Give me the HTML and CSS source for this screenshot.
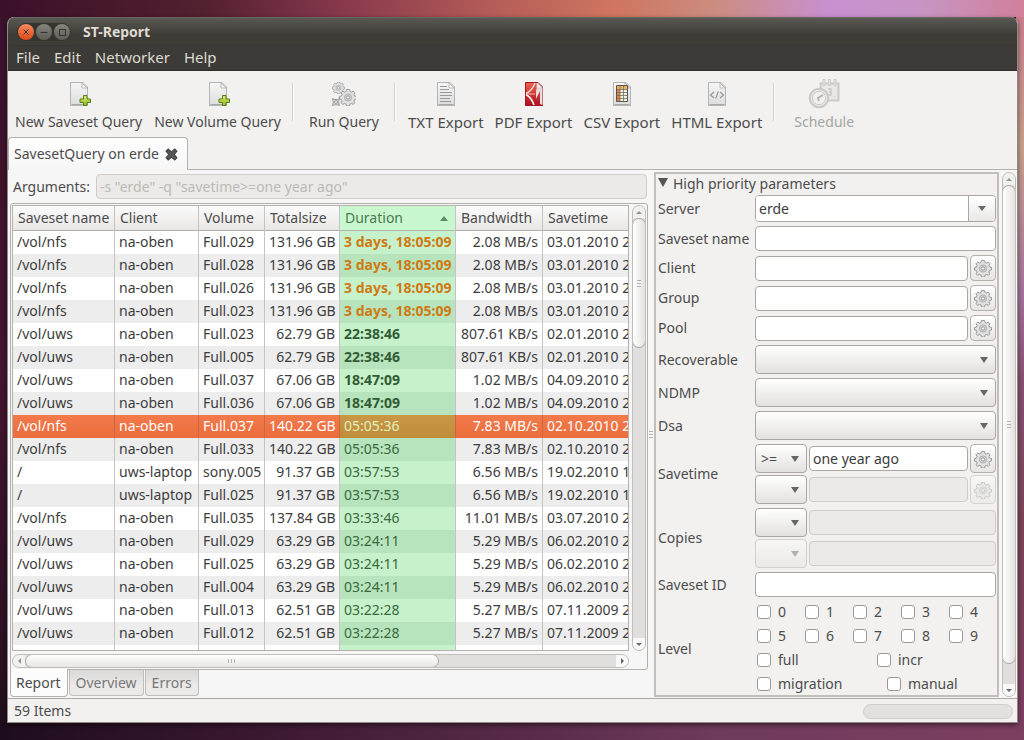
FILE: index.html
```html
<!DOCTYPE html>
<html lang="en">
<head>
<meta charset="utf-8">
<title>ST-Report</title>
<link rel="stylesheet" href="styles.css">
</head>
<body>
<svg class="defs" aria-hidden="true">
  <defs>
    <linearGradient id="paper" x1="0" y1="0" x2="0" y2="1"><stop offset="0" stop-color="#f6f6f6"/><stop offset="1" stop-color="#dcdcdc"/></linearGradient>
    <linearGradient id="green" x1="0" y1="0" x2="0" y2="1"><stop offset="0" stop-color="#e2ee6c"/><stop offset="1" stop-color="#8fb827"/></linearGradient>
    <linearGradient id="red" x1="0" y1="0" x2="0" y2="1"><stop offset="0" stop-color="#f0614e"/><stop offset="1" stop-color="#ab1022"/></linearGradient>
    <symbol id="page" viewBox="0 0 24 24"><path d="M3.500 .5H16L20.500 5V23.500H3.500Z" fill="url(#paper)" stroke="#b4b4b4"/><path d="M4.500 22.500h15" stroke="#a9a9a9" fill="none"/><path d="M15 1v5h5Z" fill="#fdfdfd" stroke="#b9b9b9"/></symbol>
    <symbol id="newpage" viewBox="0 0 24 24"><use href="#page" width="24" height="24"/><path d="M16.500 13.500h3.500v3.500h3.500v3.500h-3.500v3h-3.500v-3h-3.500v-3.500h3.500z" fill="url(#green)" stroke="#548018"/></symbol>
    <symbol id="gear" viewBox="0 0 18 18"><path d="M7.500 1.500h3l.5 2 1.500.6 1.800-1 1.600 1.600-1 1.800.6 1.500 2 .5v2.500l-2 .5-.6 1.500 1 1.800-1.600 1.600-1.800-1-1.500.6-.5 2h-3l-.5-2-1.500-.6-1.800 1-1.600-1.600 1-1.800-.6-1.500-2-.5V8.500l2-.5.6-1.500-1-1.800 1.600-1.600 1.800 1L7 3.500Z" fill="#e1e1e1" stroke="#999"/><circle cx="9" cy="9.500" r="3.600" fill="#d6d6d6" stroke="#b0b0b0"/><circle cx="9" cy="9.500" r="1.700" fill="#f4f4f4" stroke="#999"/></symbol>
  </defs>
</svg>
<main class="window">
  <header class="titlebar">
    <div class="wm">
      <button class="wm-btn close" aria-label="Close"><svg viewBox="0 0 16 16"><path d="M5.500 5.500l5 5m0-5l-5 5"/></svg></button>
      <button class="wm-btn" aria-label="Minimize"><svg viewBox="0 0 16 16"><path d="M4.500 8.500h7"/></svg></button>
      <button class="wm-btn" aria-label="Maximize"><svg viewBox="0 0 16 16"><path d="M5.500 5.500h6v6h-6z"/></svg></button>
    </div>
    <h1>ST-Report</h1>
  </header>
  <nav class="menubar"><button>File</button><button>Edit</button><button>Networker</button><button>Help</button></nav>
  <div class="toolbar">
    <button class="tool"><svg viewBox="0 0 24 24"><use href="#newpage"/></svg><span>New Saveset Query</span></button>
    <button class="tool"><svg viewBox="0 0 24 24"><use href="#newpage"/></svg><span>New Volume Query</span></button>
    <i class="sep"></i>
    <button class="tool wide"><svg viewBox="0 0 24 24"><use href="#gear" x="0" y="-1" width="13" height="13"/><use href="#gear" x="7" y="6" width="18" height="18"/><path d="M.5 16.500l2 1h3l2-1-.7 2.500v2l.7 2.500-2-.7h-3l-2 .7.700-2.500v-2Z" fill="#ddd" stroke="#999"/><circle cx="4" cy="20" r="1.500" fill="#eee" stroke="#999"/></svg><span>Run Query</span></button>
    <i class="sep near"></i>
    <div class="exports">
    <button class="tool"><svg viewBox="0 0 24 24"><use href="#page"/><path d="M6 4.500h7M6 7.500h9M6 10.500h12M6 13.500h12M6 16.500h10M6 19.500h11" stroke="#999"/></svg><span>TXT Export</span></button>
    <button class="tool"><svg viewBox="0 0 24 24"><path d="M3.500 .5H16L20.500 5V23.500H3.500Z" fill="url(#red)" stroke="#a41622"/><path d="M4 11.500Q10 9 13 1" fill="none" stroke="#f9d9d4" stroke-width="1.500"/><path d="M4 12.500Q9 15 12 23" fill="none" stroke="#fff" stroke-width="1.500"/><path d="M4 12h9" stroke="#f3b5ad"/><path d="M16 1l4.500 4.500V23L18 22V9l-4 8V9Z" fill="#e8dcdc"/><path d="M15 1v5h5Z" fill="#fff" stroke="#ccc"/></svg><span>PDF Export</span></button>
    <button class="tool"><svg viewBox="0 0 24 24"><use href="#page"/><path d="M6.500 3.500h11v16h-11z" fill="#f5f1e2" stroke="#555"/><path d="M7 4h3v15H7z" fill="#e9803c"/><path d="M7 4h10v3H7z" fill="#efb45c"/><path d="M10 4v15M13.500 4v15M7 7.500h10.500M7 10.500h10.500M7 13.500h10.500M7 16.500h10.500" stroke="#73705f" stroke-width=".8"/></svg><span>CSV Export</span></button>
    <button class="tool"><svg viewBox="0 0 24 24"><use href="#page"/><path d="M9 10l-3.500 3L9 16M15 10l3.500 3-3.500 3M13.300 9.500l-2.600 7" fill="none" stroke="#999" stroke-width="1.200"/></svg><span>HTML Export</span></button>
    </div>
    <i class="sep"></i>
    <button class="tool widest" disabled><svg class="big" viewBox="0 0 32 32"><g fill="#e9e8e7" stroke="#cbc9c7"><path d="M12.500 5.500h18v17h-18z" stroke-width="2"/><path d="M15 1.500h2v6h-2zM20.500 1.500h2v6h-2zM26 1.500h2v6h-2z"/><path d="M20 11h3v3h-2m2 0v3h-3M26 18.500h1" fill="none" stroke-width="1.500"/><circle cx="11" cy="20" r="9.300" stroke-width="2"/><circle cx="11" cy="20" r="6.700" fill="#f0efee"/></g><path d="M15 17l-5 3 1 3" fill="none" stroke="#b8b6b4" stroke-width="2"/></svg><span>Schedule</span></button>
  </div>
  <div class="doc-tabs">
    <div class="doc-tab"><span>SavesetQuery on erde</span><button aria-label="Close tab"><svg viewBox="0 0 12 12"><path d="M1 3l2-2 3 2.500L9 1l2 2-2.500 3L11 9l-2 2-3-2.500L3 11 1 9l2.500-3z" fill="#555" stroke="#444"/></svg></button></div>
  </div>
  <div class="content">
    <section class="left">
      <div class="args"><label for="args">Arguments:</label><input id="args" class="field" disabled value='-s "erde" -q "savetime&gt;=one year ago"'></div>
      <div class="report">
        <div class="grid-view">
          <table>
            <colgroup><col class="c1"><col class="c2"><col class="c3"><col class="c4"><col class="c5"><col class="c6"><col class="c7"></colgroup>
            <thead><tr><th>Saveset name</th><th>Client</th><th>Volume</th><th>Totalsize</th><th class="sorted">Duration<i class="up"></i></th><th>Bandwidth</th><th>Savetime</th></tr></thead>
            <tbody>
              <tr class="over"><td>/vol/nfs</td><td>na-oben</td><td>Full.029</td><td>131.96 GB</td><td>3 days, 18:05:09</td><td>2.08 MB/s</td><td>03.01.2010 2</td></tr>
              <tr class="over"><td>/vol/nfs</td><td>na-oben</td><td>Full.028</td><td>131.96 GB</td><td>3 days, 18:05:09</td><td>2.08 MB/s</td><td>03.01.2010 2</td></tr>
              <tr class="over"><td>/vol/nfs</td><td>na-oben</td><td>Full.026</td><td>131.96 GB</td><td>3 days, 18:05:09</td><td>2.08 MB/s</td><td>03.01.2010 2</td></tr>
              <tr class="over"><td>/vol/nfs</td><td>na-oben</td><td>Full.023</td><td>131.96 GB</td><td>3 days, 18:05:09</td><td>2.08 MB/s</td><td>03.01.2010 2</td></tr>
              <tr class="long"><td>/vol/uws</td><td>na-oben</td><td>Full.023</td><td>62.79 GB</td><td>22:38:46</td><td>807.61 KB/s</td><td>02.01.2010 2</td></tr>
              <tr class="long"><td>/vol/uws</td><td>na-oben</td><td>Full.005</td><td>62.79 GB</td><td>22:38:46</td><td>807.61 KB/s</td><td>02.01.2010 2</td></tr>
              <tr class="long"><td>/vol/uws</td><td>na-oben</td><td>Full.037</td><td>67.06 GB</td><td>18:47:09</td><td>1.02 MB/s</td><td>04.09.2010 2</td></tr>
              <tr class="long"><td>/vol/uws</td><td>na-oben</td><td>Full.036</td><td>67.06 GB</td><td>18:47:09</td><td>1.02 MB/s</td><td>04.09.2010 2</td></tr>
              <tr class="selected"><td>/vol/nfs</td><td>na-oben</td><td>Full.037</td><td>140.22 GB</td><td>05:05:36</td><td>7.83 MB/s</td><td>02.10.2010 2</td></tr>
              <tr><td>/vol/nfs</td><td>na-oben</td><td>Full.033</td><td>140.22 GB</td><td>05:05:36</td><td>7.83 MB/s</td><td>02.10.2010 2</td></tr>
              <tr><td>/</td><td>uws-laptop</td><td>sony.005</td><td>91.37 GB</td><td>03:57:53</td><td>6.56 MB/s</td><td>19.02.2010 1</td></tr>
              <tr><td>/</td><td>uws-laptop</td><td>Full.025</td><td>91.37 GB</td><td>03:57:53</td><td>6.56 MB/s</td><td>19.02.2010 1</td></tr>
              <tr><td>/vol/nfs</td><td>na-oben</td><td>Full.035</td><td>137.84 GB</td><td>03:33:46</td><td>11.01 MB/s</td><td>03.07.2010 2</td></tr>
              <tr><td>/vol/uws</td><td>na-oben</td><td>Full.029</td><td>63.29 GB</td><td>03:24:11</td><td>5.29 MB/s</td><td>06.02.2010 2</td></tr>
              <tr><td>/vol/uws</td><td>na-oben</td><td>Full.025</td><td>63.29 GB</td><td>03:24:11</td><td>5.29 MB/s</td><td>06.02.2010 2</td></tr>
              <tr><td>/vol/uws</td><td>na-oben</td><td>Full.004</td><td>63.29 GB</td><td>03:24:11</td><td>5.29 MB/s</td><td>06.02.2010 2</td></tr>
              <tr><td>/vol/uws</td><td>na-oben</td><td>Full.013</td><td>62.51 GB</td><td>03:22:28</td><td>5.27 MB/s</td><td>07.11.2009 2</td></tr>
              <tr><td>/vol/uws</td><td>na-oben</td><td>Full.012</td><td>62.51 GB</td><td>03:22:28</td><td>5.27 MB/s</td><td>07.11.2009 2</td></tr>
              <tr><td>/vol/uws</td><td>na-oben</td><td>Full.011</td><td>62.51 GB</td><td>03:22:28</td><td>5.27 MB/s</td><td>07.11.2009 2</td></tr>
            </tbody>
          </table>
        </div>
        <div class="scroll vert list-scroll"><button class="dim" aria-label="Scroll up"><i class="up"></i></button><div class="track"><div class="thumb"><i class="grip"></i></div></div><button aria-label="Scroll down"><i class="down"></i></button></div>
        <div class="scroll horz"><button class="dim" aria-label="Scroll left"><i class="prev"></i></button><div class="track"><div class="thumb"><i class="grip"></i></div></div><button aria-label="Scroll right"><i class="next"></i></button></div>
      </div>
      <div class="view-tabs"><button class="current">Report</button><button>Overview</button><button>Errors</button></div>
    </section>
    <div class="handle"><i class="grip"></i></div>
    <section class="params">
      <h2><i class="expander"></i>High priority parameters</h2>
      <div class="row"><label for="server">Server</label><div class="combo"><input id="server" value="erde"><button aria-label="Choose server"><i class="down"></i></button></div></div>
      <div class="row"><label for="ssname">Saveset name</label><input id="ssname" class="field"></div>
      <div class="row"><label for="client">Client</label><div class="line"><input id="client" class="field"><button class="opt" aria-label="Client options"><svg><use href="#gear"/></svg></button></div></div>
      <div class="row"><label for="group">Group</label><div class="line"><input id="group" class="field"><button class="opt" aria-label="Group options"><svg><use href="#gear"/></svg></button></div></div>
      <div class="row"><label for="pool">Pool</label><div class="line"><input id="pool" class="field"><button class="opt" aria-label="Pool options"><svg><use href="#gear"/></svg></button></div></div>
      <div class="row"><label for="rec">Recoverable</label><select id="rec"><option></option></select></div>
      <div class="row"><label for="ndmp">NDMP</label><select id="ndmp"><option></option></select></div>
      <div class="row"><label for="dsa">Dsa</label><select id="dsa"><option></option></select></div>
      <div class="row"><label for="stime">Savetime</label><div class="pair">
        <div class="line"><select class="op" aria-label="Savetime comparison"><option>&gt;=</option></select><input id="stime" class="field" value="one year ago"><button class="opt tall" aria-label="Savetime options"><svg><use href="#gear"/></svg></button></div>
        <div class="line"><select class="op" aria-label="Second savetime comparison"><option></option></select><input class="field" aria-label="Second savetime" disabled><button class="opt tall" aria-label="Second savetime options" disabled><svg><use href="#gear"/></svg></button></div>
      </div></div>
      <div class="row"><label for="copies">Copies</label><div class="pair">
        <div class="line"><select class="op" aria-label="Copies comparison"><option></option></select><input id="copies" class="field" disabled></div>
        <div class="line"><select class="op" aria-label="Second copies comparison" disabled><option></option></select><input class="field" aria-label="Second copies" disabled></div>
      </div></div>
      <div class="row"><label for="ssid">Saveset ID</label><input id="ssid" class="field"></div>
      <div class="row"><span>Level</span><div class="levels">
        <div class="five"><label><input type="checkbox">0</label><label><input type="checkbox">1</label><label><input type="checkbox">2</label><label><input type="checkbox">3</label><label><input type="checkbox">4</label>
        <label><input type="checkbox">5</label><label><input type="checkbox">6</label><label><input type="checkbox">7</label><label><input type="checkbox">8</label><label><input type="checkbox">9</label></div>
        <div class="two"><label><input type="checkbox">full</label><label><input type="checkbox">incr</label></div>
        <div class="two uneven"><label><input type="checkbox">migration</label><label><input type="checkbox">manual</label></div>
      </div></div>
    </section>
    <div class="scroll vert form-scroll"><button class="dim" aria-label="Scroll up"><i class="up"></i></button><div class="track"><div class="thumb"><i class="grip"></i></div></div><button aria-label="Scroll down"><i class="down"></i></button></div>
  </div>
  <footer class="statusbar"><span>59 Items</span><div class="progress" role="progressbar" aria-label="Progress"></div></footer>
</main>
</body>
</html>
```
FILE: styles.css
```css
* { box-sizing: border-box; }
body {
  margin: 0;
  height: 100vh;
  padding: 17px 6px 17px 7px;
  display: flex;
  overflow: hidden;
  font: 14px/20px "Noto Sans", "Open Sans", sans-serif;
  color: #4c4c4c;
  background:
    linear-gradient(90deg, #3a1029, #53202f 20%, #86374c 33%, #b45c58 48%, #cf7560 60%, #cb8d80 70%, #c890d0 81%, #c795c4 90%, #d0809a) top / 100% 17px no-repeat,
    linear-gradient(90deg, #1d0d1b, #3a1830 25%, #562a48 50%, #6f3a5c 70%, #7c3f60) bottom / 100% 17px no-repeat,
    linear-gradient(#c8798c, #c7a08c 20%, #a4719c 40%, #875070 52%, #7c4458 70%, #7c3f60) right / 8px 100% no-repeat,
    linear-gradient(#3c112b, #44152f 50%, #2a1022 90%, #1d0d1b);
}
button, input, select { font: inherit; color: inherit; margin: 0; padding: 0; }
button { border: 0; background: none; }
svg { display: block; }
.defs { position: absolute; width: 0; height: 0; }
.window {
  flex: 1;
  min-width: 0;
  display: flex;
  flex-direction: column;
  overflow: hidden;
  background: #f2f1f0;
  border: 1px solid #8f8b84;
  border-top: 0;
  border-radius: 7px 7px 0 0;
  box-shadow: 0 2px 5px rgba(0, 0, 0, .5);
}
.titlebar {
  height: 29px;
  display: flex;
  align-items: center;
  gap: 12px;
  padding: 0 9px;
  border-top: 1px solid #67665f;
  border-bottom: 1px solid #373632;
  background: linear-gradient(#595852, #3d3c37 60%);
}
.titlebar h1 { margin: 0; font-size: 14px; color: #dfdbd2; }
.wm { display: flex; gap: 2px; padding: 1px; border-radius: 10px; background: #35342f; }
.wm-btn { width: 16px; height: 16px; border-radius: 50%; background: linear-gradient(#85847c, #5d5c56); }
.wm-btn.close { background: linear-gradient(#f58a62, #dd4814); }
.wm-btn svg { width: 16px; height: 16px; fill: none; stroke: #35342f; }
.menubar {
  height: 25px;
  display: flex;
  gap: 14px;
  padding: 0 8px 2px;
  font-size: 15px;
  color: #dfdbd2;
  background: #3c3b37;
  border-bottom: 1px solid #2f2e2b;
}
.toolbar { height: 66px; display: flex; align-items: flex-start; padding: 7px 2px 0 1px; }
.tool { padding: 0 6px; display: flex; flex-direction: column; align-items: center; gap: 2px; white-space: nowrap; }
.tool svg { width: 24px; height: 24px; margin: 4px 0; }
.tool .big { width: 32px; height: 32px; margin: 0; }
.tool.wide { padding: 0 14px; }
.tool.widest { padding: 0 18px; }
.tool:disabled { color: #a5a3a1; }
.exports { display: flex; margin-left: 6px; font-size: 15px; }
.exports .tool { padding: 0 6px 0 5px; }
.sep { width: 2px; height: 38px; margin: 5px 1px 0 5px; border-left: 1px solid #d3d1cf; border-right: 1px solid #fafafa; }
.sep.near { margin-left: 1px; }
.doc-tabs { height: 33px; display: flex; border-bottom: 1px solid #b4b2ae; }
.doc-tab {
  height: 33px;
  display: flex;
  align-items: center;
  gap: 6px;
  padding: 0 9px 0 5px;
  border: 1px solid #b4b2ae;
  border-bottom: 0;
  border-radius: 4px 4px 0 0;
  background: linear-gradient(#fff, #f6f6f6);
}
.doc-tab svg { width: 13px; height: 13px; }
.content {
  flex: 1;
  min-height: 0;
  display: flex;
  background: #f6f6f6;
  border-bottom: 1px solid #aaa8a4;
}
.left { flex: 1; min-width: 0; display: flex; flex-direction: column; padding: 4px 0 0 2px; }
.args { display: flex; gap: 6px; align-items: center; padding: 0 1px 4px 3px; }
.field {
  flex: 1;
  min-width: 0;
  width: 100%;
  height: 25px;
  padding: 0 3px;
  border: 1px solid #aaa7a3;
  border-radius: 4px;
  background: #fff;
  color: #3c3c3c;
}
.field:disabled { background: #ebeae9; border-color: #cfccc9; color: #bdb9b5; }
.report {
  flex: 1;
  min-height: 0;
  display: grid;
  grid-template: minmax(0, 1fr) 14px / minmax(0, 1fr) 14px;
  gap: 3px;
  padding: 1px;
  border: 1px solid #b4b2ae;
  border-radius: 3px 3px 3px 0;
}
.grid-view { overflow: hidden; border: 1px solid #b4b2ae; background: #fff; }
table { width: 100%; border-collapse: separate; border-spacing: 0; table-layout: fixed; }
.c1 { width: 102px; } .c2 { width: 84px; } .c3 { width: 66px; } .c4 { width: 75px; } .c5 { width: 116px; } .c6 { width: 87px; }
th, td { padding: 0 4px; border-right: 1px solid #c6c4c2; white-space: nowrap; text-align: left; }
th:last-child, td:last-child { border-right: 0; padding-right: 0; }
th { height: 25px; font-weight: normal; padding: 0 5px; border-bottom: 1px solid #b4b2ae; background: linear-gradient(#fbfbfb, #e9e7e6); }
td { height: 23px; line-height: 19px; padding-bottom: 2px; color: #3c3c3c; }
tbody tr:nth-child(even) { background: #ededed; }
td:nth-child(4), td:nth-child(6) { text-align: right; }
td:nth-child(5) { background: #c6f1cb; color: #39693c; }
tr:nth-child(even) td:nth-child(5) { background: #b7e4bd; }
th.sorted { background: #c9f8cf; color: #4c7a50; }
.sorted .up { float: right; margin: 8px 2px 0 0; border-bottom-color: #5c8b60; }
.over td:nth-child(5), .long td:nth-child(5) { font-weight: bold; }
.over td:nth-child(5) { color: #ce7a12; }
.long td:nth-child(5) { color: #325c33; }
tbody .selected { background: linear-gradient(#f37a4c, #ec6c3c); }
tbody .selected td { color: #fff; border-color: #c96840; }
tbody .selected td:nth-child(5) { background: linear-gradient(#c99847, #bf8c38); color: #e0f0c0; }
.up, .down, .prev, .next, .expander { display: block; width: 0; height: 0; border: 4px solid transparent; }
.up { border-top: 0; border-bottom: 5px solid #777; }
.down { border-bottom: 0; border-top: 5px solid #6b6b6b; }
.prev { border-left: 0; border-right: 5px solid #777; }
.next { border-right: 0; border-left: 5px solid #666; }
.scroll { display: flex; border: 1px solid #c0beba; border-radius: 8px; background: #e0dfde; overflow: hidden; }
.scroll button { flex: none; display: flex; align-items: center; justify-content: center; background: #f8f8f8; }
.scroll .dim { opacity: .7; }
.scroll i:not(.grip) { border-width: 3px; }
.scroll .up { border-top: 0; border-bottom-width: 4px; }
.scroll .down { border-bottom: 0; border-top-width: 4px; }
.scroll .prev { border-left: 0; border-right-width: 4px; }
.scroll .next { border-right: 0; border-left-width: 4px; }
.track { flex: 1; min-height: 0; display: flex; }
.thumb { display: flex; align-items: center; justify-content: center; border: 1px solid #aaa8a4; border-radius: 7px; background: #f5f5f5; }
.vert { flex-direction: column; width: 14px; }
.vert button { height: 12px; }
.vert .track { flex-direction: column; }
.vert .thumb { margin: 0 -1px; background: linear-gradient(90deg, #fff, #e3e2e1); }
.list-scroll .thumb { height: 31%; }
.form-scroll .thumb { height: 96%; }
.horz .thumb { width: 70%; margin: -1px 0; background: linear-gradient(#fff, #e7e6e5); }
.horz button { width: 12px; }
.grip { width: 4px; height: 7px; background: repeating-linear-gradient(#b5b3b1 0 1px, transparent 1px 3px); }
.horz .grip { width: 7px; height: 4px; background: repeating-linear-gradient(90deg, #b5b3b1 0 1px, transparent 1px 3px); }
.view-tabs { height: 28px; display: flex; align-items: flex-start; gap: 1px; }
.view-tabs button {
  height: 26px;
  padding: 0 6px;
  border: 1px solid #c0beba;
  border-top: 0;
  border-radius: 0 0 4px 4px;
  background: linear-gradient(#d9d8d6, #ebeae9 60%);
  color: #777;
}
.view-tabs .current { height: 28px; margin-top: -1px; padding: 1px 6px 0 5px; background: #fcfcfc; border-color: #b4b2ae; color: #4c4c4c; }
.handle { width: 6px; display: flex; align-items: center; justify-content: center; }
.params {
  flex: 0 0 345px;
  display: flex;
  flex-direction: column;
  gap: 4px;
  margin: 2px 3px 1px 0;
  padding: 0 1px 0 2px;
  border: 2px solid #c2bfba;
  background: #f2f1f0;
  overflow: hidden;
}
.params h2 { display: flex; gap: 5px; margin: 0 0 -3px; font-size: 14px; font-weight: normal; line-height: 20px; }
.expander { border: 5px solid transparent; border-top: 9px solid #555; border-bottom: 0; margin-top: 4px; }
.row { display: grid; grid-template-columns: 97px minmax(0, 1fr); align-items: center; }
.row > label, .row > span { white-space: nowrap; }
.line { display: flex; gap: 2px; align-items: center; }
.pair { display: grid; gap: 2px; }
.combo { display: flex; height: 27px; border: 1px solid #aaa7a3; border-radius: 4px; overflow: hidden; background: #fff; }
.combo input { flex: 1; min-width: 0; border: 0; padding: 0 3px; color: #3c3c3c; }
.combo button { width: 27px; display: flex; align-items: center; justify-content: center; border-left: 1px solid #aaa7a3; background: linear-gradient(#fff, #e9e8e7); }
.params select {
  appearance: none;
  width: 100%;
  height: 29px;
  padding: 0 5px;
  border: 1px solid #aaa7a3;
  border-radius: 4px;
  background: url("data:image/svg+xml,%3Csvg xmlns='http://www.w3.org/2000/svg' width='8' height='6'%3E%3Cpath d='M0 0h8L4 6z' fill='%23666'/%3E%3C/svg%3E") right 7px center no-repeat, linear-gradient(#fff, #e2e1df);
}
.params .op { flex: 0 0 52px; }
.params select:disabled { opacity: .45; }
.opt { flex: none; width: 26px; height: 26px; display: flex; align-items: center; justify-content: center; border: 1px solid #b5b2ae; border-radius: 4px; background: linear-gradient(#fff, #e6e5e3); }
.opt svg { width: 18px; height: 18px; }
.opt.tall { height: 29px; }
.opt:disabled { opacity: .45; }
.levels { margin-top: -1px; padding-left: 2px; }
.levels label { height: 24px; display: flex; align-items: center; gap: 7px; }
.five { display: grid; grid-template-columns: repeat(5, 48px); }
.two { display: grid; grid-template-columns: 120px 1fr; }
.uneven { grid-template-columns: 130px 1fr; }
.levels input { appearance: none; width: 14px; height: 14px; border: 1px solid #9b9894; border-radius: 3px; background: #fff; }
.form-scroll { margin: 2px 1px 1px 0; }
.statusbar { height: 24px; margin-top: -1px; display: flex; align-items: center; justify-content: space-between; padding: 2px 4px 0 6px; }
.content { margin-bottom: 0; }
.progress { width: 150px; height: 15px; border: 1px solid #d0cecb; border-radius: 8px; background: #e2e1e0; }
```
